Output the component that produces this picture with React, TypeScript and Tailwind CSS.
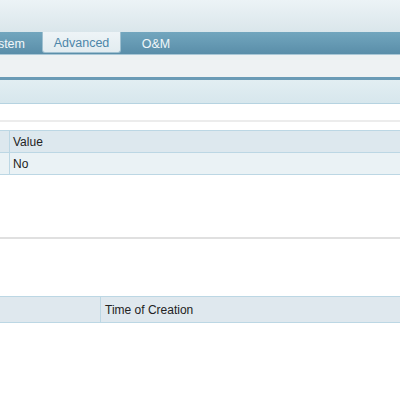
export default function App() {
  const tabs = ["System", "Advanced", "O&M"];
  return (
    <div className="w-[400px] h-[400px] overflow-hidden bg-white text-[12px] text-[#222] font-['Liberation_Sans',Arial,sans-serif]">
      {/* top header */}
      <div className="h-[32px] bg-gradient-to-b from-[#ecf3f6] to-[#dae6eb]" />

      {/* tab strip, first tab scrolled partly out of view */}
      <div className="h-[23px] flex bg-gradient-to-b from-[#72a6be] to-[#5a8ea9] border-b border-[#a9c7d6]">
        <div className="w-[42px] pt-[2px] flex items-center justify-end pr-[17px] text-[#f1f7fa] text-[12.5px] overflow-hidden whitespace-nowrap">
          <span className="shrink-0">{tabs[0]}</span>
        </div>
        <div className="w-[79px] h-[21px] pt-[2px] flex items-center justify-center bg-gradient-to-b from-[#eef4f7] to-[#e2ecf0] text-[#4c86a9] text-[12.5px] border-x border-b border-[#9fc0d0] rounded-b-[3px]">
          {tabs[1]}
        </div>
        <div className="w-[70px] pt-[2px] flex items-center justify-center text-[#f1f7fa] text-[12.5px]">
          {tabs[2]}
        </div>
      </div>

      {/* toolbar band */}
      <div className="h-[22px] bg-[#eef2f3]" />
      <div className="h-[3px] bg-[#6a9bb5]" />
      <div className="h-[24px] bg-gradient-to-b from-[#e2eef2] to-[#d7e7ed] border-b border-[#b6d3e1]" />

      <div className="h-[16px]" />
      <div className="h-[2px] bg-[#ececec]" />
      <div className="h-[8px]" />

      {/* parameter table */}
      <div className="border-y border-[#bcd7e4]">
        <div className="h-[22px] flex bg-[#dde8ee] border-b border-[#bcd7e4]">
          <div className="w-[10px] border-r border-[#bcd7e4]" />
          <div className="flex items-center pl-[3px]">Value</div>
        </div>
        <div className="h-[21px] flex bg-[#eaf2f5]">
          <div className="w-[10px] border-r border-[#bcd7e4]" />
          <div className="flex items-center pl-[3px]">No</div>
        </div>
      </div>

      <div className="h-[62px]" />
      <div className="h-[2px] bg-[#e0e0e0]" />
      <div className="h-[57px]" />

      {/* log table */}
      <div className="h-[27px] flex bg-[#dfe8ee] border-y border-[#bcd7e4]">
        <div className="w-[101px] border-r border-[#bcd7e4]" />
        <div className="flex items-center pl-[4px]">Time of Creation</div>
      </div>
    </div>
  );
}
